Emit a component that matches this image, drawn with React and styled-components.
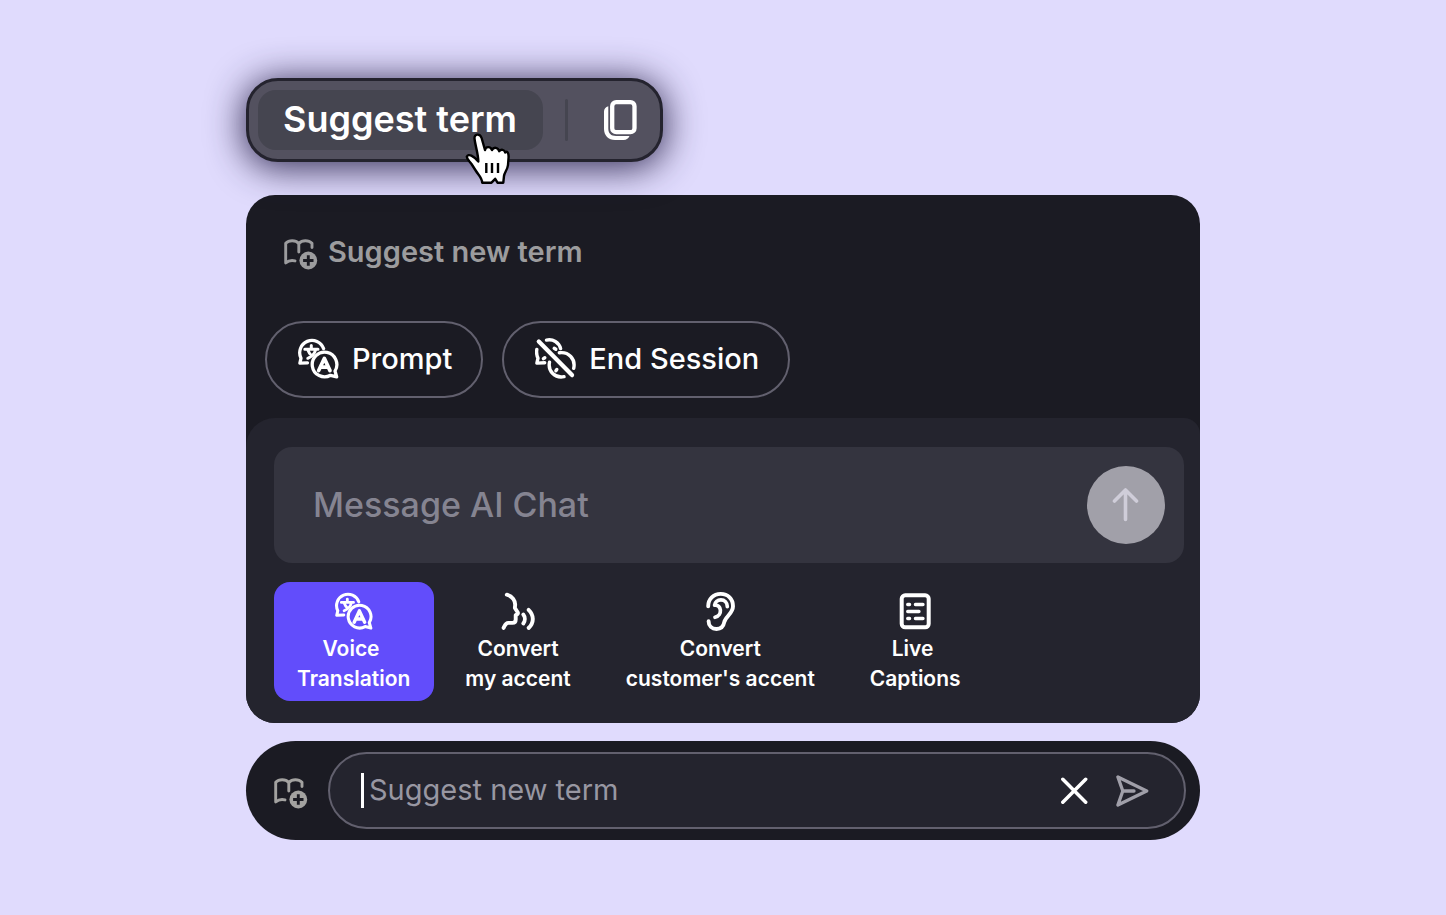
import React from "react";
import styled, { createGlobalStyle } from "styled-components";

const Global = createGlobalStyle`
  *, *::before, *::after { box-sizing: border-box; }
  body { margin: 0; min-height: 100vh; background: #e0dbfd; font-family: Inter, "Liberation Sans", sans-serif; }
  button, input { font-family: inherit; margin: 0; }
  button { cursor: pointer; }
  svg { display: block; flex: none; }
`;

const Page = styled.main`
  width: 100%;
  max-width: 954px;
  margin: 0 auto;
  padding: 78px 0 60px;
  display: flex;
  flex-direction: column;
  align-items: stretch;
`;

const FloatingBar = styled.div`
  position: relative;
  align-self: flex-start;
  display: flex;
  align-items: center;
  padding: 9px 23px 9px 9px;
  margin-bottom: 33px;
  border: 3px solid #24232e;
  border-radius: 32px;
  background: #53515f;
  box-shadow: 0 4px 36px 2px rgba(28, 22, 62, 0.88);
`;

const TermButton = styled.button`
  height: 60px;
  padding: 0 26px 2px 25px;
  border: 0;
  border-radius: 18px;
  background: #454550;
  color: #fff;
  font-size: 36px;
  font-weight: 600;
  line-height: 58px;
  white-space: nowrap;
`;

const Divider = styled.span`
  width: 3px;
  height: 42px;
  margin: 0 36px 0 22px;
  border-radius: 2px;
  background: #454550;
`;

const IconButton = styled.button`
  display: flex;
  align-items: center;
  justify-content: center;
  padding: 0;
  border: 0;
  background: none;
  color: ${(p) => p.$tone || "#fff"};
`;

const Pointer = styled.span`
  position: absolute;
  left: 216px;
  top: 51px;
  pointer-events: none;
`;

const Card = styled.section`
  border-radius: 29px;
  overflow: hidden;
  background: #1b1b23;
`;

const CardTop = styled.div`
  padding: 37px 19px 20px;
`;

const Heading = styled.h1`
  display: flex;
  align-items: center;
  gap: 10px;
  margin: 0 0 49px;
  padding-left: 19px;
  color: #9c9c9e;
  font-size: 29px;
  font-weight: 600;
  line-height: 40px;
`;

const BookMark = styled.span`
  padding-top: 5px;
  color: ${(p) => p.$tone || "inherit"};
`;

const Chips = styled.div`
  display: flex;
  flex-wrap: wrap;
  gap: 19px;
`;

const Chip = styled.button`
  display: flex;
  align-items: center;
  gap: 13px;
  height: 77px;
  padding: 0 29px 2px 31px;
  border: 2px solid #62606e;
  border-radius: 39px;
  background: transparent;
  color: #fff;
  font-size: 29px;
  font-weight: 500;
  white-space: nowrap;
`;

const Composer = styled.div`
  padding: 29px 16px 22px 28px;
  border-radius: 29px 16px 0 0;
  background: #24242e;
`;

const MessageBox = styled.form`
  display: flex;
  align-items: center;
  height: 116px;
  padding: 0 19px 0 39px;
  margin-bottom: 19px;
  border-radius: 18px;
  background: #34343f;
`;

const TextField = styled.input`
  flex: 1;
  min-width: 0;
  height: 60px;
  padding: 0 0 2px;
  border: 0;
  outline: 0;
  background: transparent;
  color: #fff;
  font-size: ${(p) => p.$size};
  font-weight: ${(p) => p.$weight};
  &::placeholder { color: ${(p) => p.$hint}; opacity: 1; }
`;

const SendCircle = styled.button`
  display: flex;
  align-items: center;
  justify-content: center;
  width: 78px;
  height: 78px;
  padding: 0;
  border: 0;
  border-radius: 50%;
  background: #a1a0a9;
  color: #cfcdd9;
`;

const Tools = styled.div`
  display: flex;
  flex-wrap: wrap;
  gap: 8px;
`;

const Tool = styled.button`
  display: flex;
  flex-direction: column;
  align-items: center;
  gap: 3px;
  padding: 9px 24px 7px 23px;
  border: 0;
  border-radius: 16px;
  background: ${(p) => (p.$active ? "#624dfb" : "transparent")};
  color: #fff;
  font-size: 21px;
  font-weight: 600;
  line-height: 30px;
  text-align: center;
  white-space: pre;
`;

const TermBar = styled.section`
  display: flex;
  align-items: center;
  gap: 20px;
  margin-top: 18px;
  padding: 11px 14px 11px 28px;
  border-radius: 50px;
  background: #1b1b23;
`;

const TermField = styled.form`
  flex: 1;
  min-width: 0;
  display: flex;
  align-items: center;
  height: 77px;
  padding: 0 35px 0 31px;
  border: 2px solid #62606e;
  border-radius: 39px;
  background: #24242e;
`;

const Caret = styled.span`
  width: 3px;
  height: 35px;
  margin-right: 5px;
  background: #fff;
`;

const Actions = styled.div`
  display: flex;
  align-items: center;
  gap: 28px;
`;

const stroke = {
  fill: "none",
  stroke: "currentColor",
  strokeLinecap: "round",
  strokeLinejoin: "round",
  "aria-hidden": true,
};

const CopyIcon = () => (
  <svg width="33" height="40" viewBox="0 0 33 40" {...stroke} strokeWidth="4.300">
    <rect x="8.200" y="2.200" width="22.300" height="30" rx="4" />
    <path d="M4.300 6.200C1.600 7 0 9 0 11.500V29C0 35.500 4.500 40 11 40H19.500C22.500 40 24.800 38.300 25.500 36H12C7 36 4.300 33.300 4.300 28.500Z" fill="currentColor" stroke="none" />
  </svg>
);

const HandIcon = () => (
  <svg width="46" height="54" viewBox="0 0 46 54" aria-hidden="true" strokeLinejoin="round" strokeLinecap="round">
    <path
      d="M9.500 6.500C9 1.800 15 1 16.600 6L20 18C20.500 14.500 25.500 13.800 27 18C28.500 14.800 33 15 34.200 19.200C36 17 39.500 17.500 40.200 20.500C42 18.500 43.800 21 43.600 25L43 33C42.600 37.500 39.400 40.500 39 44L38.300 50.700H32.500L30.200 46.800L26.500 50.700H17.200C17 45.500 13.500 43 11 39L6.500 32C5 29.500 1.800 27.500 1.800 24.800C3.500 21 8.500 24 13.300 29.500C13.300 22 10.300 14 9.500 6.500Z"
      fill="#fff"
      stroke="#000"
      strokeWidth="2.400"
    />
    <path d="M21.300 31V41M27 31V41M33 31V41" stroke="#000" strokeWidth="2.400" strokeLinecap="butt" />
  </svg>
);

const BookPlusIcon = ({ hole = "#1b1b23" }) => (
  <svg width="34" height="31" viewBox="0 0 34 31" {...stroke} strokeWidth="2.900">
    <path d="M14.800 13V4.500C11.500 .8 5 .8 1.700 4.300V24C4.300 21.700 7.500 21 11 21.900" />
    <path d="M14.800 4.500C18.300 .8 24.500 .8 28 4.300V8.500" />
    <circle cx="24.300" cy="21.500" r="8.900" fill="currentColor" stroke="none" />
    <path d="M24.300 16.300V26.700M19.100 21.500H29.500" stroke={hole} strokeLinecap="butt" />
  </svg>
);

const TranslateIcon = ({ size = 41 }) => (
  <svg width={size} height={size} viewBox="0 0 41 41" {...stroke} strokeWidth="3.300">
    <path d="M25.600 10.600A12.300 12.300 0 1 0 3 20.200L1.900 25.100L9.500 24.800" />
    <path d="M6.800 11.200H20M13.300 7.600V11M17.600 11.800C16.800 15.500 14 18.500 9.800 20.300M10 12.200C10.800 14.500 12 16.500 13.800 17.700" strokeWidth="3" />
    <path d="M37 33A12.300 12.300 0 1 0 32.500 37.300L38.700 38.900Z" />
    <path d="M20.700 32.600L26.300 20.400L32 32.600M22.700 29.200H30" strokeWidth="3.700" />
  </svg>
);

const TranslateOffIcon = () => (
  <svg width="41" height="41" viewBox="0 0 41 41" {...stroke} strokeWidth="3.400">
    <path d="M1.800 11.500C1.300 14.500 1.700 17.500 3 20.200L1.900 25.100L9.700 24.800" />
    <path d="M11.500 2.100C18 .8 24 4.200 25.600 10.600" />
    <path d="M24.300 14.800C33.500 13.400 40.800 21 38.700 30.300" />
    <path d="M14.500 24.200C12.700 33.500 20 40.400 29 38.700" />
    <path d="M19.200 10.300L20.800 11.300M8.400 20.600L9.800 19.700M20.900 32.800L21.800 31.500" />
    <path d="M3.800 3.600L37 37.100" strokeWidth="4.300" />
  </svg>
);

const SpeakIcon = () => (
  <svg width="40" height="40" viewBox="0 0 40 40" {...stroke} strokeWidth="3.900">
    <path d="M8.800 3.700C14 5 18 9.500 17 15.500L16.900 17L19.800 21.500C20.200 22.600 19.500 23.300 17.700 24V28.500C17.700 31 16.500 31.900 14.500 31.900H10.300C7.500 31.900 6.800 34.500 5.600 36.900" />
    <path d="M25.300 23.500C27.300 26 27.300 29.800 25.300 32.500M30.600 18.800C36.200 24.300 36.200 31.500 30.600 37" />
  </svg>
);

const EarIcon = () => (
  <svg width="40" height="40" viewBox="0 0 40 40" {...stroke} strokeWidth="3.900">
    <path d="M8.200 15.300C8.200 8 13.500 2.900 20.700 2.900C28 2.900 33 8 33 15.300C33 22.500 25.500 25.500 24.300 31C23.500 35.500 20.500 38 16.500 38C12 38 8.600 35 8.600 30.300" />
    <path d="M27.300 15.600C27.300 11.500 24.500 8.900 20.900 8.900C17.500 8.900 15 11 14.600 14.200C21.500 13.200 23 24.500 15 26.300" strokeWidth="3.700" />
  </svg>
);

const CaptionsIcon = () => (
  <svg width="40" height="40" viewBox="0 0 40 40" {...stroke} strokeWidth="4">
    <rect x="6.700" y="4.300" width="27" height="32" rx="3.500" />
    <path d="M12.700 13.500H14.600M20.400 13.500H28M12.700 20.500H24M12.700 27.500H14.600M20.400 27.500H28" strokeWidth="3.300" />
  </svg>
);

const ArrowUpIcon = () => (
  <svg width="40" height="40" viewBox="0 0 40 40" {...stroke} strokeWidth="3.600">
    <path d="M19.500 34.500V5M8.500 16L19.500 5L30.500 16" />
  </svg>
);

const CloseIcon = () => (
  <svg width="28" height="28" viewBox="0 0 28 28" {...stroke} strokeWidth="3.500">
    <path d="M2.800 2.300L25.700 25.200M25.700 2.300L2.800 25.200" />
  </svg>
);

const SendIcon = () => (
  <svg width="33" height="32" viewBox="0 0 33 32" {...stroke} strokeWidth="3.300">
    <path d="M1.900 2L30.700 16L1.900 30L6.800 16ZM6.800 16H18" />
  </svg>
);

const tools = [
  { label: "Voice \nTranslation", icon: <TranslateIcon size={38} />, active: true },
  { label: "Convert\nmy accent", icon: <SpeakIcon /> },
  { label: "Convert\ncustomer's accent", icon: <EarIcon /> },
  { label: "Live \nCaptions", icon: <CaptionsIcon /> },
];

const ToolIcon = styled.span`
  display: flex;
  align-items: center;
  justify-content: center;
  height: 40px;
`;

export default function App() {
  const stop = (e) => e.preventDefault();
  return (
    <>
      <Global />
      <Page>
        <FloatingBar role="toolbar" aria-label="Selection actions">
          <TermButton type="button">Suggest term</TermButton>
          <Divider />
          <IconButton type="button" aria-label="Copy"><CopyIcon /></IconButton>
          <Pointer><HandIcon /></Pointer>
        </FloatingBar>

        <Card>
          <CardTop>
            <Heading>
              <BookMark><BookPlusIcon /></BookMark>
              Suggest new term
            </Heading>
            <Chips>
              <Chip type="button"><TranslateIcon />Prompt</Chip>
              <Chip type="button"><TranslateOffIcon />End Session</Chip>
            </Chips>
          </CardTop>
          <Composer>
            <MessageBox onSubmit={stop}>
              <TextField $size="34px" $weight={500} $hint="#858491" aria-label="Message AI Chat" placeholder="Message AI Chat" />
              <SendCircle type="submit" aria-label="Send message"><ArrowUpIcon /></SendCircle>
            </MessageBox>
            <Tools>
              {tools.map((t) => (
                <Tool key={t.label} type="button" $active={t.active} aria-pressed={!!t.active}>
                  <ToolIcon>{t.icon}</ToolIcon>
                  <span>{t.label}</span>
                </Tool>
              ))}
            </Tools>
          </Composer>
        </Card>

        <TermBar>
          <BookMark $tone="#a3a2a0"><BookPlusIcon /></BookMark>
          <TermField onSubmit={stop}>
            <Caret />
            <TextField $size="29px" $weight={400} $hint="#9897a2" aria-label="Suggest new term" placeholder="Suggest new term" />
            <Actions>
              <IconButton type="button" aria-label="Clear"><CloseIcon /></IconButton>
              <IconButton type="submit" aria-label="Send term" $tone="#a09fa9"><SendIcon /></IconButton>
            </Actions>
          </TermField>
        </TermBar>
      </Page>
    </>
  );
}
